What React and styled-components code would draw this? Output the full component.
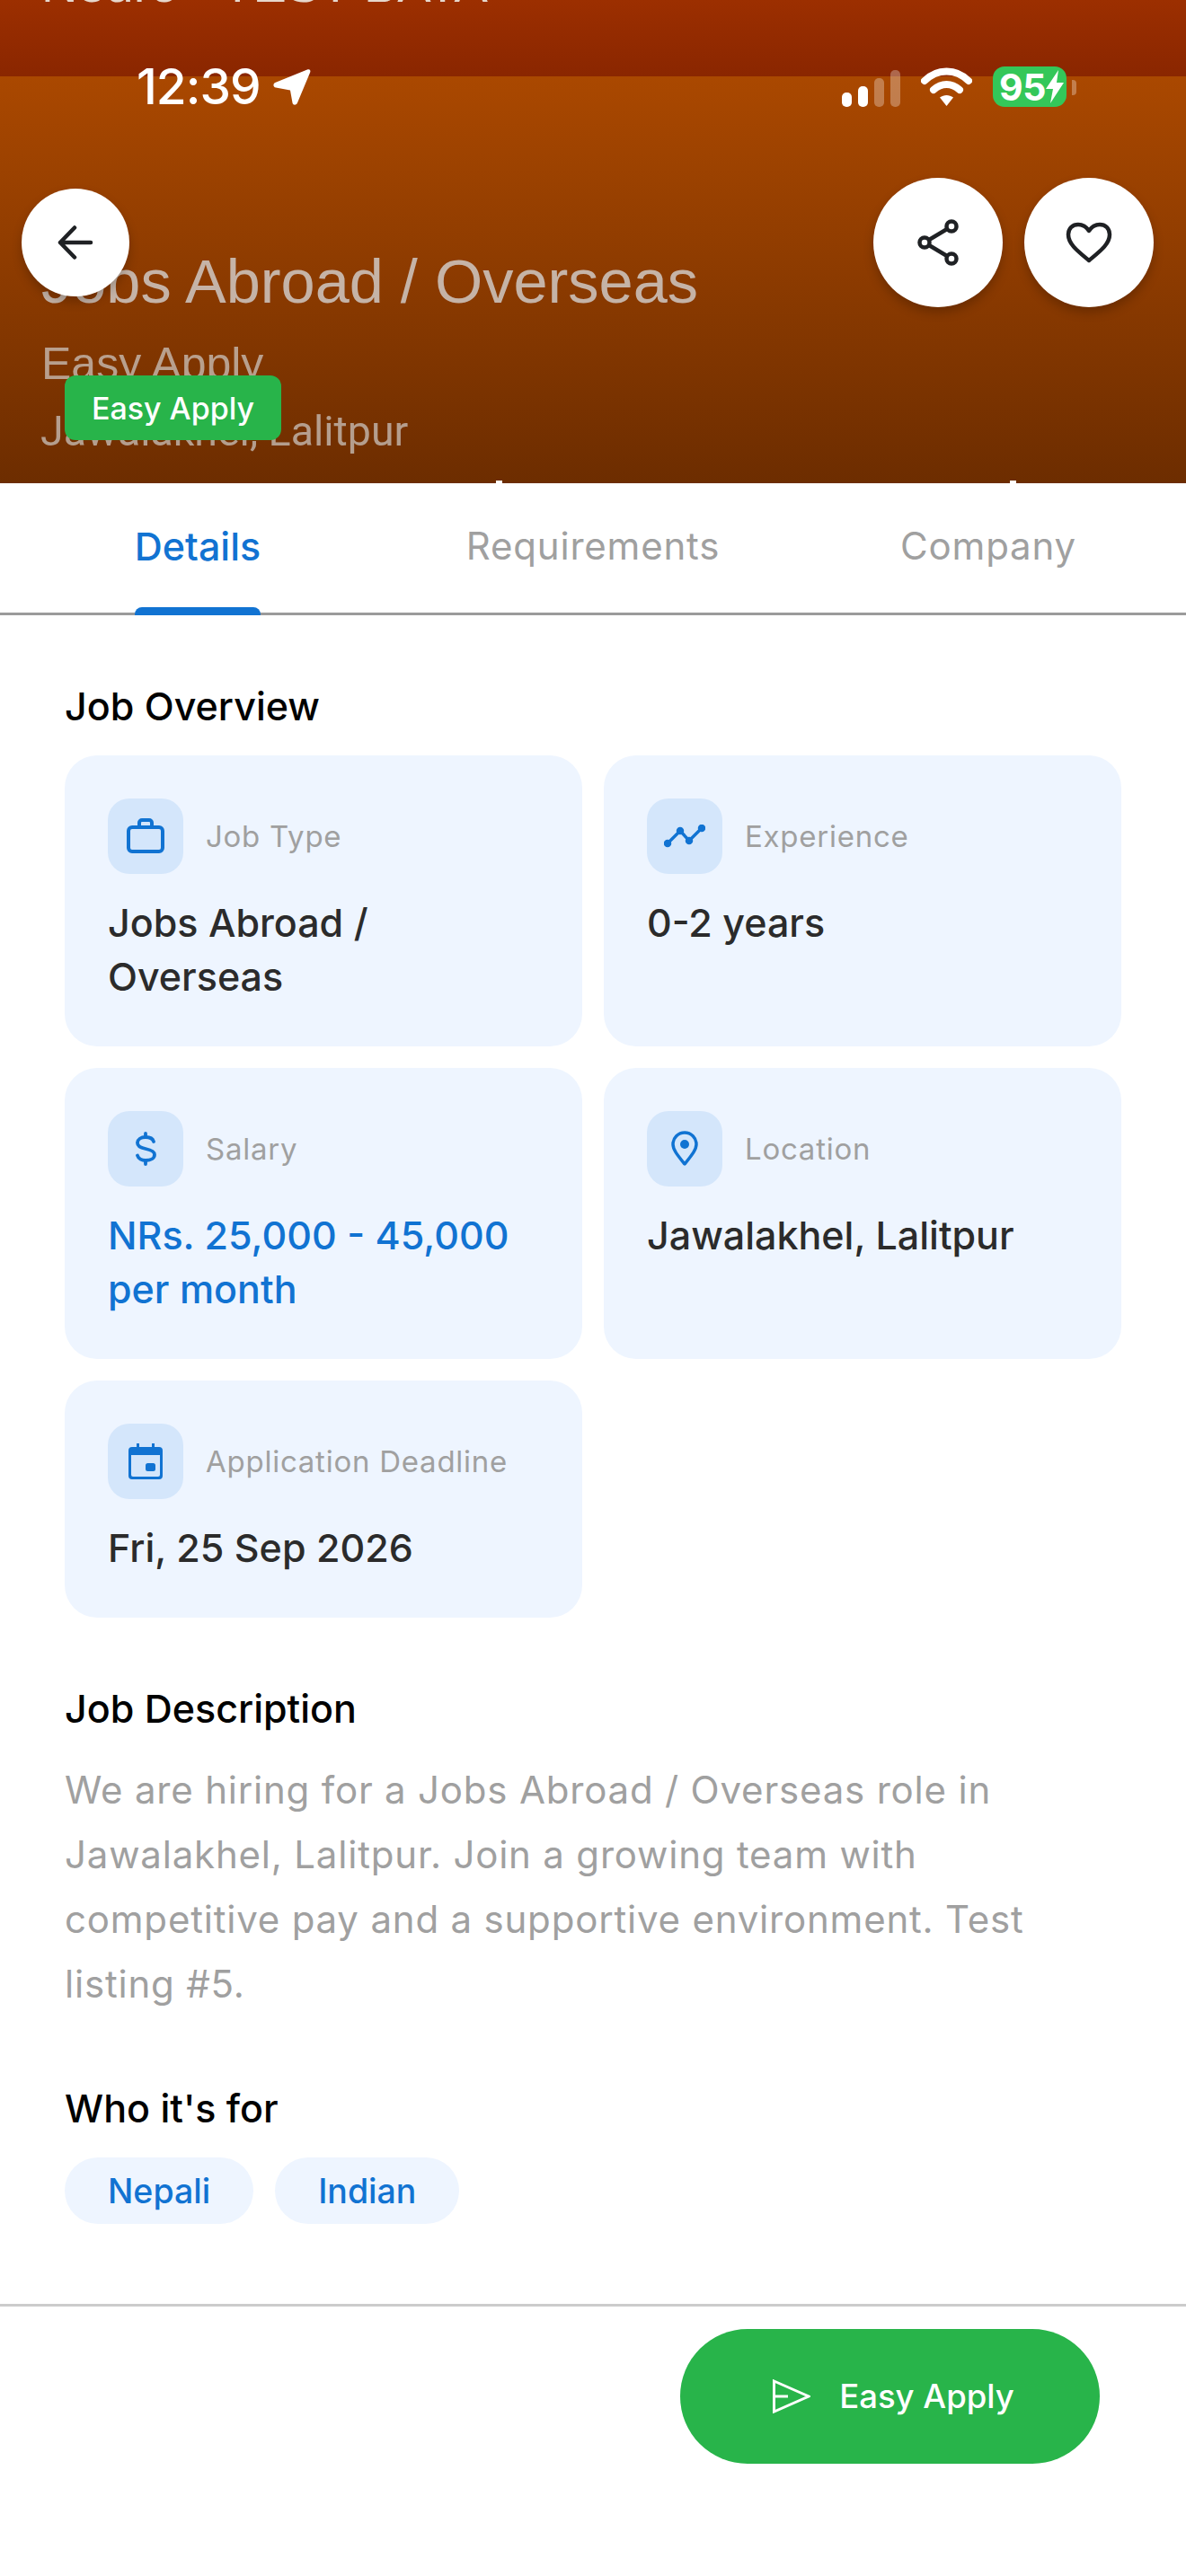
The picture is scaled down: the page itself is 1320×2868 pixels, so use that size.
import React from 'react'
import styled, { createGlobalStyle } from 'styled-components'

const GlobalStyle = createGlobalStyle`
	html, body {
		margin: 0;
		padding: 0;
		background: #fff;
		font-family: 'Inter', 'Noto Sans', sans-serif;
	}
	* {
		box-sizing: border-box;
	}
`

const BLUE = '#1173d2'

const Page = styled.div`
	width: 1320px;
	height: 2868px;
	display: flex;
	flex-direction: column;
	overflow: hidden;
	background: #fff;
`

// hero
const Hero = styled.header`
	position: relative;
	height: 538px;
	flex: none;
	display: flex;
	flex-direction: column;
	overflow: hidden;
`

const TopBand = styled.div`
	height: 85px;
	flex: none;
	overflow: hidden;
	padding-left: 46px;
	background: linear-gradient(180deg, #9c2f00 0%, #8a2600 100%);
`

const ClippedTitle = styled.div`
	margin-top: -43px;
	font-family: 'Liberation Sans', sans-serif;
	font-size: 56px;
	line-height: 52px;
	color: #e6d8cc;
	white-space: nowrap;
`

const HeroBody = styled.div`
	flex: 1;
	display: flex;
	flex-direction: column;
	padding: 191px 0 0 46px;
	background: linear-gradient(180deg, #aa4800 0%, #6d2d00 100%);
	color: rgba(214, 214, 214, 0.78);
	filter: blur(0.5px);
`

const GhostTitle = styled.div`
	font-family: 'Liberation Sans', sans-serif;
	font-size: 68.5px;
	line-height: 76px;
	white-space: nowrap;
`

const GhostType = styled.div`
	margin-top: 25px;
	font-family: 'Liberation Sans', sans-serif;
	font-size: 50px;
	line-height: 56px;
	opacity: 0.85;
`

const GhostPlace = styled.div`
	margin-top: 21px;
	margin-left: -1px;
	font-family: 'Roboto', sans-serif;
	font-size: 46.5px;
	line-height: 52px;
	opacity: 0.85;
`

const Sliver = styled.span`
	position: absolute;
	bottom: 0;
	left: ${(p) => p.$left}px;
	width: 7px;
	height: 3px;
	background: #fff;
`

const Badge = styled.span`
	position: absolute;
	left: 72px;
	top: 418px;
	width: 241px;
	height: 72px;
	display: flex;
	align-items: center;
	justify-content: center;
	border-radius: 12px;
	background: #28b44a;
	color: #fff;
	font-size: 34px;
	font-weight: 500;
`

const StatusBar = styled.div`
	position: absolute;
	top: 74px;
	left: 152px;
	right: 133px;
	height: 45px;
	display: flex;
	align-items: center;
	justify-content: space-between;
	color: #fff;
`

const Clock = styled.div`
	display: flex;
	align-items: center;
	gap: 14px;
	font-size: 55px;
	font-weight: 500;
	letter-spacing: -1px;
	line-height: 45px;
`

const StatusIcons = styled.div`
	display: flex;
	align-items: center;
	gap: 23px;
`

const SignalBars = styled.div`
	display: flex;
	align-items: flex-end;
	gap: 7px;
	height: 41px;
	margin-top: 3px;
`

const Bar = styled.i`
	display: block;
	width: 11px;
	height: ${(p) => p.$h}px;
	border-radius: 5px;
	background: ${(p) => (p.$dim ? 'rgba(255,255,255,0.3)' : '#fff')};
`

const Battery = styled.div`
	position: relative;
	width: 82px;
	height: 45px;
	padding-left: 7px;
	display: flex;
	align-items: center;
	border-radius: 13px;
	background: #34c759;
	font-size: 41px;
	font-weight: 700;
	letter-spacing: -0.5px;
	color: #fff;

	&::after {
		content: '';
		position: absolute;
		left: 88px;
		top: 15px;
		width: 5px;
		height: 17px;
		border-radius: 0 4px 4px 0;
		background: rgba(255, 255, 255, 0.3);
	}
`

const RoundButton = styled.button`
	position: absolute;
	padding: 0;
	border: none;
	border-radius: 50%;
	display: flex;
	align-items: center;
	justify-content: center;
	background: #fff;
	box-shadow: 0 6px 12px rgba(0, 0, 0, 0.22);
`

const BackButton = styled(RoundButton)`
	left: 24px;
	top: 210px;
	width: 120px;
	height: 120px;
`

const ActionButton = styled(RoundButton)`
	left: ${(p) => p.$left}px;
	top: 198px;
	width: 144px;
	height: 144px;
`

// tabs
const Tabs = styled.nav`
	height: 147px;
	flex: none;
	display: grid;
	grid-template-columns: repeat(3, 1fr);
	border-bottom: 3px solid #9b9b9b;
`

const Tab = styled.div`
	position: relative;
	display: flex;
	justify-content: center;
	padding-top: 42px;
	font-size: ${(p) => (p.$active ? 43 : 42)}px;
	line-height: 56px;
	font-weight: ${(p) => (p.$active ? 500 : 400)};
	letter-spacing: ${(p) => (p.$active ? '0' : '0.8px')};
	color: ${(p) => (p.$active ? BLUE : '#a0a0a0')};

	&::after {
		content: '';
		display: ${(p) => (p.$active ? 'block' : 'none')};
		position: absolute;
		left: 150px;
		bottom: -3px;
		width: 140px;
		height: 9px;
		border-radius: 8px 8px 0 0;
		background: ${BLUE};
	}
`

// content
const Content = styled.main`
	flex: 1;
	padding: 74px 72px 0;
`

const SectionTitle = styled.h2`
	margin: ${(p) => p.$top || 0}px 0 28px;
	font-size: 43px;
	line-height: 54px;
	font-weight: 500;
	color: #000;
`

const CardGrid = styled.div`
	display: grid;
	grid-template-columns: 576px 576px;
	gap: 24px;
`

const Card = styled.div`
	padding: 48px;
	border-radius: 36px;
	background: #eef5ff;
`

const CardHead = styled.div`
	display: flex;
	align-items: center;
	gap: 25px;
	margin-bottom: 24px;
`

const IconBox = styled.div`
	width: 84px;
	height: 84px;
	flex: none;
	display: flex;
	align-items: center;
	justify-content: center;
	border-radius: 24px;
	background: #d4e6fb;
	color: ${BLUE};
`

const CardLabel = styled.span`
	font-size: 33px;
	letter-spacing: 0.75px;
	color: #a0a0a0;
`

const CardValue = styled.div`
	font-size: 43px;
	line-height: 60px;
	font-weight: 500;
	color: ${(p) => (p.$accent ? BLUE : '#2b2b2b')};
`

const Description = styled.p`
	margin: 0;
	font-size: 42px;
	line-height: 72px;
	letter-spacing: 0.8px;
	color: #a0a0a0;
`

const Chips = styled.div`
	display: flex;
	gap: 24px;
`

const Chip = styled.span`
	height: 74px;
	padding: 0 48px;
	display: flex;
	align-items: center;
	border-radius: 37px;
	background: #eef5ff;
	font-size: 37.5px;
	font-weight: 500;
	color: ${BLUE};
`

// footer
const Footer = styled.footer`
	height: 303px;
	flex: none;
	display: flex;
	justify-content: flex-end;
	align-items: flex-start;
	padding: 25px 96px 0 0;
	border-top: 3px solid #cccccc;
`

const ApplyButton = styled.button`
	width: 467px;
	height: 150px;
	display: flex;
	align-items: center;
	justify-content: center;
	gap: 32px;
	padding: 0 0 0 8px;
	border: none;
	border-radius: 75px;
	background: #28b44a;
	color: #fff;
	font-family: inherit;
	font-size: 36.5px;
	font-weight: 500;
`

// icons
const ArrowIcon = () => (
	<svg width="40" height="38" viewBox="0 0 40 38" fill="none" stroke="#1f2124" strokeWidth="4.5" strokeLinecap="round" strokeLinejoin="round">
		<path d="M37 19H3M19 2.500 3 19l16 16.500" />
	</svg>
)

const ShareIcon = () => (
	<svg width="46" height="52" viewBox="0 0 46 52" fill="none" stroke="#1f2124" strokeWidth="4.5">
		<circle cx="38" cy="8" r="5.5" />
		<circle cx="8" cy="26" r="5.5" />
		<circle cx="38" cy="44" r="5.5" />
		<path d="M33 11 13 23M13 29l20 12" />
	</svg>
)

const HeartIcon = () => (
	<svg width="52" height="46" viewBox="0 0 52 46" fill="none" stroke="#1f2124" strokeWidth="4.5" strokeLinejoin="round">
		<path d="M26 43C14 33 3 25 3 14 3 7 8 3 14 3c5 0 9 2.500 12 7 3-4.500 7-7 12-7 6 0 11 4 11 11 0 11-11 19-23 29Z" />
	</svg>
)

const LocationArrow = () => (
	<svg width="42" height="40" viewBox="0 0 42 40" fill="#fff">
		<path d="M38 0.500c2.500-1 4 .5 3.200 3L27 37.500c-1 2.800-4.800 3-5.500 0L19 23.500 3 20.500c-3-.8-3.500-4-.8-5.500Z" />
	</svg>
)

const WifiIcon = () => (
	<svg width="57" height="44" viewBox="0 0 57 44" fill="none" stroke="#fff" strokeWidth="8" strokeLinecap="round">
		<path d="M4 15C18 1 39 1 53 15" />
		<path d="M14 25c9-8 20-8 29 0" />
		<path d="M21 33.500c4.500-3.500 10.500-3.500 15 0L28.500 43Z" fill="#fff" stroke="none" />
	</svg>
)

const BoltIcon = () => (
	<svg width="20" height="37" viewBox="0 0 20 37" fill="#fff">
		<path d="M14 0 0 21h8L5 37l15-23h-8Z" />
	</svg>
)

const BriefcaseIcon = () => (
	<svg width="42" height="40" viewBox="0 0 42 40" fill="none" stroke="currentColor" strokeWidth="4" strokeLinejoin="round">
		<rect x="2" y="10" width="38" height="27" rx="4" />
		<path d="M14 10V5a3 3 0 0 1 3-3h8a3 3 0 0 1 3 3v5" />
	</svg>
)

const TrendIcon = () => (
	<svg width="46" height="26" viewBox="0 0 46 26" fill="currentColor" stroke="currentColor" strokeWidth="3.500">
		<path d="M4 21 18 7l10 11L42 4" fill="none" />
		<circle cx="4" cy="21" r="2.500" />
		<circle cx="18" cy="7" r="2.500" />
		<circle cx="28" cy="18" r="2.500" />
		<circle cx="42" cy="4" r="2.500" />
	</svg>
)

const DollarIcon = () => (
	<svg width="24" height="38" viewBox="0 0 24 38" fill="none" stroke="currentColor" strokeWidth="3.800" strokeLinecap="round">
		<path d="M21 11c-1-3.500-5-5-9-5-5 0-9 2.500-9 6.500s4 5.500 9 6.500 10 2.500 10 6.500-4 6.500-10 6.500c-4 0-8-2-9-5.500" />
		<path d="M12 2v4M12 32v4" />
	</svg>
)

const PinIcon = () => (
	<svg width="30" height="40" viewBox="0 0 30 40" fill="none" stroke="currentColor" strokeWidth="3.500">
		<path d="M15 37C7 27 2 21 2 15a13 13 0 0 1 26 0c0 6-5 12-13 22Z" strokeLinejoin="round" />
		<circle cx="15" cy="15" r="5" fill="currentColor" stroke="none" />
	</svg>
)

const CalendarIcon = () => (
	<svg width="38" height="40" viewBox="0 0 38 40" fill="currentColor">
		<path d="M9 0h3v4h14V0h3v4h5a4 4 0 0 1 4 4v28a4 4 0 0 1-4 4H4a4 4 0 0 1-4-4V8a4 4 0 0 1 4-4h5Zm-6 13v22a2 2 0 0 0 2 2h28a2 2 0 0 0 2-2V13Z" fillRule="evenodd" />
		<rect x="19" y="22" width="11" height="9" rx="2.500" />
	</svg>
)

const SendIcon = () => (
	<svg width="42" height="38" viewBox="0 0 42 38" fill="none" stroke="#fff" strokeWidth="3">
		<path d="M1.500 2 40 19 1.500 36ZM1.500 19H17" />
	</svg>
)

const cards = [
	{ label: 'Job Type', value: 'Jobs Abroad / Overseas', icon: <BriefcaseIcon /> },
	{ label: 'Experience', value: '0-2 years', icon: <TrendIcon /> },
	{ label: 'Salary', value: 'NRs. 25,000 - 45,000 per month', icon: <DollarIcon />, accent: true },
	{ label: 'Location', value: 'Jawalakhel, Lalitpur', icon: <PinIcon /> },
	{ label: 'Application Deadline', value: 'Fri, 25 Sep 2026', icon: <CalendarIcon /> },
]

const App = () => (
	<Page>
		<GlobalStyle />
		<Hero>
			<TopBand>
				<ClippedTitle>Neuro - TEST BATA</ClippedTitle>
			</TopBand>
			<HeroBody>
				<GhostTitle>Jobs Abroad / Overseas</GhostTitle>
				<GhostType>Easy Apply</GhostType>
				<GhostPlace>Jawalakhel, Lalitpur</GhostPlace>
			</HeroBody>
			<Sliver $left={552} />
			<Sliver $left={1124} />
			<Badge>Easy Apply</Badge>
			<StatusBar>
				<Clock>
					12:39
					<LocationArrow />
				</Clock>
				<StatusIcons>
					<SignalBars>
						<Bar $h={16} />
						<Bar $h={23} />
						<Bar $h={32} $dim />
						<Bar $h={41} $dim />
					</SignalBars>
					<WifiIcon />
					<Battery>
						95
						<BoltIcon />
					</Battery>
				</StatusIcons>
			</StatusBar>
			<BackButton>
				<ArrowIcon />
			</BackButton>
			<ActionButton $left={972}>
				<ShareIcon />
			</ActionButton>
			<ActionButton $left={1140}>
				<HeartIcon />
			</ActionButton>
		</Hero>
		<Tabs>
			<Tab $active>Details</Tab>
			<Tab>Requirements</Tab>
			<Tab>Company</Tab>
		</Tabs>
		<Content>
			<SectionTitle>Job Overview</SectionTitle>
			<CardGrid>
				{cards.map((card) => (
					<Card key={card.label}>
						<CardHead>
							<IconBox>{card.icon}</IconBox>
							<CardLabel>{card.label}</CardLabel>
						</CardHead>
						<CardValue $accent={card.accent}>{card.value}</CardValue>
					</Card>
				))}
			</CardGrid>
			<SectionTitle $top={74}>Job Description</SectionTitle>
			<Description>
				We are hiring for a Jobs Abroad / Overseas role in Jawalakhel, Lalitpur. Join a growing team with
				competitive pay and a supportive environment. Test listing #5.
			</Description>
			<SectionTitle $top={75}>Who it's for</SectionTitle>
			<Chips>
				<Chip>Nepali</Chip>
				<Chip>Indian</Chip>
			</Chips>
		</Content>
		<Footer>
			<ApplyButton>
				<SendIcon />
				Easy Apply
			</ApplyButton>
		</Footer>
	</Page>
)

export default App
